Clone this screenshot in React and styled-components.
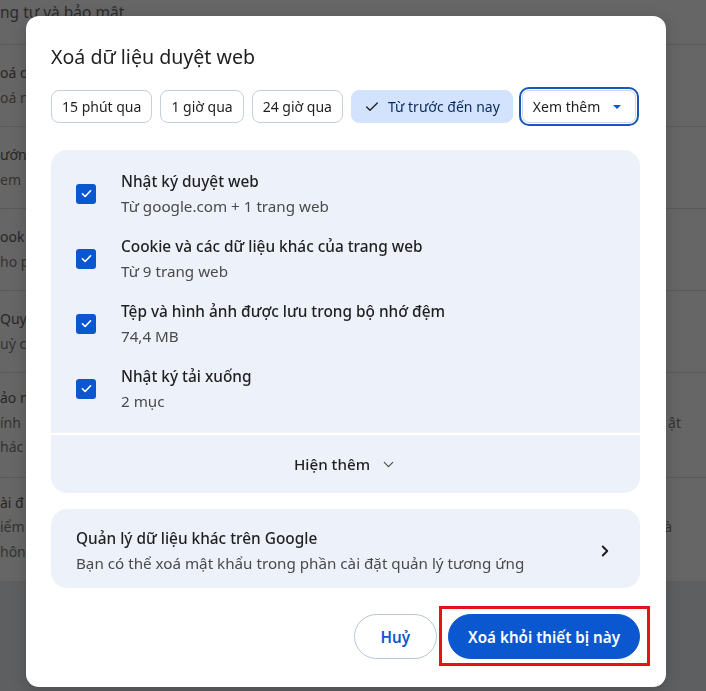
import React from 'react';
import styled, { createGlobalStyle } from 'styled-components';
import { Check, ChevronDown, ChevronRight } from 'lucide-react';

const GlobalStyle = createGlobalStyle`
  html, body { margin: 0; padding: 0; }
  body {
    font-family: "Noto Sans", "Open Sans", Arial, sans-serif;
    background: #5e5f60;
    overflow: hidden;
  }
`;

// dimmed settings page behind the dialog
const Page = styled.div`
  height: 691px;
  background: #5e5f60;
`;

const SettingsCard = styled.div`
  background: #666666;
`;

const BgHeader = styled.div`
  height: 44px;
  line-height: 24px;
  font-size: 15.5px;
  color: #2b2b2b;
`;

const BgRow = styled.div`
  border-top: 1px solid #5a5a5a;
  padding: ${p => (p.$tall ? '13px 0 17px' : '16px 0 16px')};
`;

const BgLine = styled.div`
  display: flex;
  justify-content: space-between;
  line-height: 24.5px;
  font-size: 14px;
  color: ${p => (p.$strong ? '#262626' : '#333333')};
  white-space: nowrap;
`;

const BgEnd = styled.span`
  padding-right: ${p => p.$inset}px;
`;

// dialog
const Dialog = styled.div`
  position: fixed;
  left: 26px;
  top: 16px;
  width: 640px;
  box-sizing: border-box;
  padding: 27px 26px 28px 25px;
  background: #ffffff;
  border-radius: 13px;
  box-shadow: 0 4px 16px rgba(0, 0, 0, 0.18);
  color: #1f1f1f;
`;

const Title = styled.h2`
  margin: 0;
  font-size: 19.6px;
  font-weight: 400;
  line-height: 28px;
  color: #1f1f1f;
`;

const ChipRow = styled.div`
  display: flex;
  align-items: center;
  gap: 8px;
  margin-top: 19px;
`;

const Chip = styled.button`
  display: inline-flex;
  align-items: center;
  gap: 8px;
  height: 33px;
  box-sizing: border-box;
  padding: 0 ${p => (p.$selected ? 12 : 10)}px;
  border-radius: 8px;
  border: 1px solid ${p => (p.$selected ? '#d3e3fd' : '#c5cedb')};
  background: ${p => (p.$selected ? '#d3e3fd' : '#ffffff')};
  color: ${p => (p.$selected ? '#0a2a5c' : '#1f1f1f')};
  font-family: inherit;
  font-size: 14px;
  white-space: nowrap;
`;

const Dropdown = styled.button`
  display: inline-flex;
  align-items: center;
  justify-content: space-between;
  height: 33px;
  width: 114px;
  box-sizing: border-box;
  padding: 0 14px 0 10px;
  margin-left: 1px;
  border-radius: 7px;
  border: 1px solid #c9d6ec;
  outline: 2px solid #1b55b5;
  outline-offset: 1px;
  background: #ffffff;
  color: #1f1f1f;
  font-family: inherit;
  font-size: 14px;
`;

const Caret = styled.span`
  width: 0;
  height: 0;
  border-left: 4px solid transparent;
  border-right: 4px solid transparent;
  border-top: 4px solid #0b57d0;
`;

const Panel = styled.div`
  margin-top: 27px;
  background: #edf2fa;
  border-radius: 16px 16px 0 0;
  padding: 11px 25px 12px;
`;

const ItemRow = styled.label`
  display: flex;
  align-items: center;
  gap: 25px;
  height: 65px;
`;

const Box = styled.span`
  flex: none;
  width: 20px;
  height: 20px;
  border-radius: 3px;
  background: #0b57d0;
  display: flex;
  align-items: center;
  justify-content: center;
`;

const ItemText = styled.div`
  display: flex;
  flex-direction: column;
`;

const ItemTitle = styled.span`
  font-size: 15.4px;
  font-weight: 500;
  line-height: 25px;
  color: #1f1f1f;
`;

const ItemSub = styled.span`
  font-size: 15.2px;
  line-height: 25px;
  color: #4a4a4a;
`;

const MoreBar = styled.button`
  display: flex;
  width: 100%;
  align-items: center;
  justify-content: center;
  gap: 10px;
  height: 58px;
  margin-top: 2px;
  border: 0;
  background: #edf2fa;
  border-radius: 0 0 16px 16px;
  font-family: inherit;
  font-size: 15.2px;
  font-weight: 500;
  color: #1f1f1f;
  padding: 0;
`;

const LinkCard = styled.div`
  display: flex;
  align-items: center;
  justify-content: space-between;
  margin-top: 16px;
  height: 79px;
  box-sizing: border-box;
  padding: 4px 26px 0 25px;
  background: #edf2fa;
  border-radius: 16px;
`;

const Actions = styled.div`
  display: flex;
  justify-content: flex-end;
  gap: 11px;
  margin-top: 26px;
`;

const Button = styled.button`
  height: 45px;
  box-sizing: border-box;
  border-radius: 23px;
  padding: 0 ${p => (p.$primary ? 19 : 26)}px;
  border: 1px solid ${p => (p.$primary ? '#0b57d0' : '#b8c3d6')};
  background: ${p => (p.$primary ? '#0b57d0' : '#ffffff')};
  color: ${p => (p.$primary ? '#ffffff' : '#0b57d0')};
  font-family: inherit;
  font-size: 15.2px;
  font-weight: 600;
`;

// red annotation frame drawn over the primary button
const Marked = styled.div`
  position: relative;
  display: flex;
  &::after {
    content: '';
    position: absolute;
    top: -8px;
    bottom: -7px;
    left: -9px;
    right: -10px;
    border: 3px solid #e5121b;
    pointer-events: none;
  }
`;

const TickIcon = () => (
  <svg width="13" height="13" viewBox="0 0 24 24" fill="none">
    <path d="M4.5 12.5l5 5L19.5 7" stroke="#fff" strokeWidth="3" strokeLinecap="round" strokeLinejoin="round" />
  </svg>
);

const items = [
  { title: 'Nhật ký duyệt web', sub: 'Từ google.com + 1 trang web' },
  { title: 'Cookie và các dữ liệu khác của trang web', sub: 'Từ 9 trang web' },
  { title: 'Tệp và hình ảnh được lưu trong bộ nhớ đệm', sub: '74,4 MB' },
  { title: 'Nhật ký tải xuống', sub: '2 mục' },
];

// only the slivers of the page that show beside the dialog
const bgRows = [
  [['oá d'], ['oá n']],
  [['ướn'], ['em']],
  [['ook'], ['ho p']],
  [['Quyề'], ['uỳ c']],
  [['ảo m'], ['ính', 'ật', 25], ['hác']],
  [['ài đ'], ['iểm', 'à', 34], ['hông']],
];

export default function App() {
  return (
    <>
      <GlobalStyle />
      <Page>
        <SettingsCard>
          <BgHeader>ng tư và bảo mật</BgHeader>
          {bgRows.map((row, i) => (
            <BgRow key={i} $tall={row.length > 2}>
              {row.map(([left, right, inset], j) => (
                <BgLine key={j} $strong={j === 0}>
                  <span>{left}</span>
                  {right && <BgEnd $inset={inset}>{right}</BgEnd>}
                </BgLine>
              ))}
            </BgRow>
          ))}
        </SettingsCard>
      </Page>

      <Dialog>
        <Title>Xoá dữ liệu duyệt web</Title>

        <ChipRow>
          <Chip>15 phút qua</Chip>
          <Chip>1 giờ qua</Chip>
          <Chip>24 giờ qua</Chip>
          <Chip $selected>
            <Check size={16} strokeWidth={2} color="#1f1f1f" />
            Từ trước đến nay
          </Chip>
          <Dropdown>
            Xem thêm
            <Caret />
          </Dropdown>
        </ChipRow>

        <Panel>
          {items.map(item => (
            <ItemRow key={item.title}>
              <Box>
                <TickIcon />
              </Box>
              <ItemText>
                <ItemTitle>{item.title}</ItemTitle>
                <ItemSub>{item.sub}</ItemSub>
              </ItemText>
            </ItemRow>
          ))}
        </Panel>
        <MoreBar>
          Hiện thêm
          <ChevronDown size={17} strokeWidth={1.6} color="#444" />
        </MoreBar>

        <LinkCard>
          <ItemText>
            <ItemTitle>Quản lý dữ liệu khác trên Google</ItemTitle>
            <ItemSub>Bạn có thể xoá mật khẩu trong phần cài đặt quản lý tương ứng</ItemSub>
          </ItemText>
          <ChevronRight size={18} strokeWidth={2.6} color="#1f1f1f" />
        </LinkCard>

        <Actions>
          <Button>Huỷ</Button>
          <Marked>
            <Button $primary>Xoá khỏi thiết bị này</Button>
          </Marked>
        </Actions>
      </Dialog>
    </>
  );
}
